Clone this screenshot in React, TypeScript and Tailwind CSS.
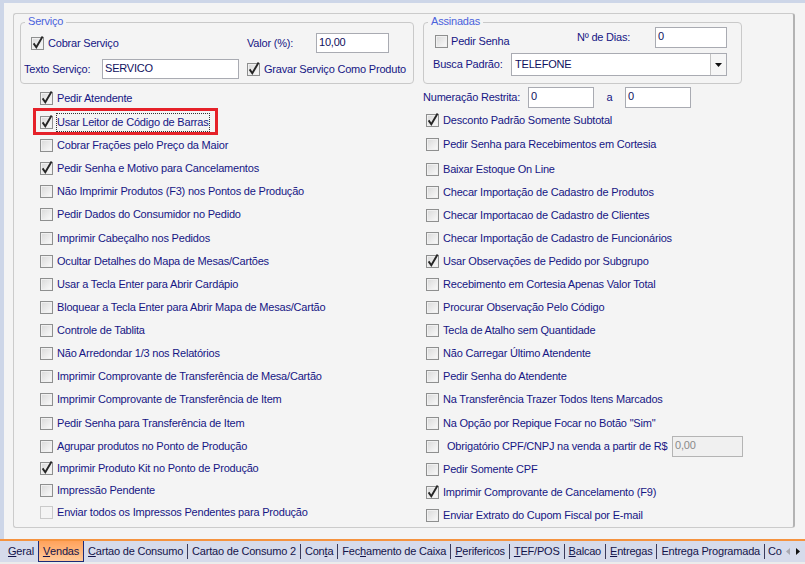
import React from 'react';

type Item = {
  label: string;
  checked?: boolean;
  disabled?: boolean;
  focus?: boolean;
  h: string;
};

const leftItems: Item[] = [
  { label: 'Pedir Atendente', checked: true, h: 'h-[23px]' },
  { label: 'Usar Leitor de Código de Barras', checked: true, focus: true, h: 'h-[24px]' },
  { label: 'Cobrar Frações pelo Preço da Maior', h: 'h-[23px]' },
  { label: 'Pedir Senha e Motivo para Cancelamentos', checked: true, h: 'h-[23px]' },
  { label: 'Não Imprimir Produtos (F3) nos Pontos de Produção', h: 'h-[23px]' },
  { label: 'Pedir Dados do Consumidor no Pedido', h: 'h-[23px]' },
  { label: 'Imprimir Cabeçalho nos Pedidos', h: 'h-[24px]' },
  { label: 'Ocultar Detalhes do Mapa de Mesas/Cartões', h: 'h-[23px]' },
  { label: 'Usar a Tecla Enter para Abrir Cardápio', h: 'h-[23px]' },
  { label: 'Bloquear a Tecla Enter para Abrir Mapa de Mesas/Cartão', h: 'h-[23px]' },
  { label: 'Controle de Tablita', h: 'h-[23px]' },
  { label: 'Não Arredondar 1/3 nos Relatórios', h: 'h-[23px]' },
  { label: 'Imprimir Comprovante de Transferência de Mesa/Cartão', h: 'h-[23px]' },
  { label: 'Imprimir Comprovante de Transferência de Item', h: 'h-[23px]' },
  { label: 'Pedir Senha para Transferência de Item', h: 'h-[24px]' },
  { label: 'Agrupar produtos no Ponto de Produção', h: 'h-[22px]' },
  { label: 'Imprimir Produto Kit no Ponto de Produção', checked: true, h: 'h-[23px]' },
  { label: 'Impressão Pendente', h: 'h-[21px]' },
  { label: 'Enviar todos os Impressos Pendentes para Produção', disabled: true, h: 'h-[22px]' },
];

const rightItems: Item[] = [
  { label: 'Desconto Padrão Somente Subtotal', checked: true, h: 'h-[23px]' },
  { label: 'Pedir Senha para Recebimentos em Cortesia', h: 'h-[25px]' },
  { label: 'Baixar Estoque On Line', h: 'h-[24px]' },
  { label: 'Checar Importação de Cadastro de Produtos', h: 'h-[23px]' },
  { label: 'Checar Importacao de Cadastro de Clientes', h: 'h-[23px]' },
  { label: 'Checar Importação de Cadastro de Funcionários', h: 'h-[23px]' },
  { label: 'Usar Observações de Pedido por Subgrupo', checked: true, h: 'h-[23px]' },
  { label: 'Recebimento em Cortesia Apenas Valor Total', h: 'h-[23px]' },
  { label: 'Procurar Observação Pelo Código', h: 'h-[23px]' },
  { label: 'Tecla de Atalho sem Quantidade', h: 'h-[23px]' },
  { label: 'Não Carregar Último Atendente', h: 'h-[23px]' },
  { label: 'Pedir Senha do Atendente', h: 'h-[23px]' },
  { label: 'Na Transferência Trazer Todos Itens Marcados', h: 'h-[23px]' },
  { label: 'Na Opção por Repique Focar no Botão "Sim"', h: 'h-[24px]' },
];

const rightTail: Item[] = [
  { label: 'Pedir Somente CPF', h: 'h-[24px]' },
  { label: 'Imprimir Comprovante de Cancelamento (F9)', checked: true, h: 'h-[23px]' },
  { label: 'Enviar Extrato do Cupom Fiscal por E-mail', h: 'h-[22px]' },
];

const tabs: { pre: string; u: string; post: string; active?: boolean }[] = [
  { pre: '', u: 'G', post: 'eral' },
  { pre: '', u: 'V', post: 'endas', active: true },
  { pre: '', u: 'C', post: 'artao de Consumo' },
  { pre: 'Cartao de Consumo 2', u: '', post: '' },
  { pre: 'Con', u: 't', post: 'a' },
  { pre: 'Fec', u: 'h', post: 'amento de Caixa' },
  { pre: '', u: 'P', post: 'erifericos' },
  { pre: '', u: 'T', post: 'EF/POS' },
  { pre: '', u: 'B', post: 'alcao' },
  { pre: '', u: 'E', post: 'ntregas' },
  { pre: 'Entrega Programada', u: '', post: '' },
  { pre: 'Co', u: '', post: '' },
];

const CheckBox: React.FC<{ checked?: boolean; disabled?: boolean }> = ({ checked, disabled }) => (
  <span
    className={
      disabled
        ? 'relative block w-[13px] h-[13px] shrink-0 border border-[#cacaca] bg-[#f4f4f4]'
        : 'relative block w-[13px] h-[13px] shrink-0 border border-[#8e8f8f] bg-linear-to-br from-[#d9d9d9] to-[#fbfbfb] shadow-[inset_0_0_0_1px_#f0f0f0]'
    }
  >
    {checked && (
      <svg width="13" height="13" viewBox="0 0 13 13" className="absolute left-[-1px] top-[-1px] overflow-visible">
        <path d="M2.6 6.4 L5.3 10.2 L11.6 -0.6" fill="none" stroke="#262626" strokeWidth="1.9" />
      </svg>
    )}
  </span>
);

const CheckRow: React.FC<{ item: Item }> = ({ item }) => (
  <div className={`relative flex items-center gap-[4px] ${item.h}`}>
    <CheckBox checked={item.checked} disabled={item.disabled} />
    {item.focus ? (
      <span className="-ml-[1px] border border-dotted border-[#333] py-[2px] leading-[13px] text-[#161684]">{item.label}</span>
    ) : (
      <span className="leading-[13px] text-[#161684] whitespace-nowrap">{item.label}</span>
    )}
    {item.focus && (
      <div className="absolute left-[-7px] top-[-2px] w-[185px] h-[27px] border-[3px] border-[#e52129]" />
    )}
  </div>
);

const TextBox: React.FC<{ value: string; className: string; disabled?: boolean }> = ({ value, className, disabled }) => (
  <div
    className={`${className} border pl-[2px] pt-[1px] leading-[15px] ${
      disabled ? 'border-[#b4b4b4] bg-[#f0f0f0] text-[#8a8a8a]' : 'border-[#a9abb2] bg-white text-[#10105e]'
    }`}
  >
    {value}
  </div>
);

export default function App() {
  return (
    <div className="w-[805px] h-[564px] overflow-hidden flex flex-col bg-[#f4f4f4] font-['Liberation_Sans',Arial,sans-serif] text-[11px] tracking-[-0.2px] text-[#161684]">
      <div className="h-[3px] bg-[#cdd6e8] shrink-0" />
      <div className="flex flex-1 min-h-0">
        <div className="w-[4px] bg-[#cdd6e8]" />
        <div className="pl-[9px] pt-[10px]">
          {/* outer frame */}
          <div className="w-[782px] h-[515px] rounded-[3px] border border-[#cbcbcb] border-r-2 border-r-[#b3b3b3] flex flex-col">
            <div className="flex gap-[9px] mt-[8px] pl-[6px]">
              {/* Serviço */}
              <div className="relative w-[394px] h-[62px] rounded-[4px] border border-[#c9c9c9] pt-[10px]">
                <span className="absolute left-[4px] top-[-8px] px-[3px] bg-[#f4f4f4] text-[#4a62dc] leading-[13px]">Serviço</span>
                <div className="flex items-center h-[20px] pl-[10px]">
                  <div className="w-[216px] flex items-center gap-[4px]">
                    <CheckBox checked />
                    <span>Cobrar Serviço</span>
                  </div>
                  <span className="w-[69px]">Valor (%):</span>
                  <TextBox value="10,00" className="w-[73px] h-[20px]" />
                </div>
                <div className="flex items-center h-[20px] mt-[6px] pl-[3px]">
                  <span className="w-[78px]">Texto Serviço:</span>
                  <TextBox value="SERVICO" className="w-[137px] h-[20px]" />
                  <div className="ml-[8px] flex items-center gap-[4px]">
                    <CheckBox checked />
                    <span className="whitespace-nowrap">Gravar Serviço Como Produto</span>
                  </div>
                </div>
              </div>
              {/* Assinadas */}
              <div className="relative w-[319px] h-[62px] rounded-[4px] border border-[#c9c9c9] pt-[4px]">
                <span className="absolute left-[4px] top-[-8px] px-[3px] bg-[#f4f4f4] text-[#4a62dc] leading-[13px]">Assinadas</span>
                <div className="flex items-center h-[21px] pl-[11px]">
                  <div className="w-[142px] mt-[8px] flex items-center gap-[3px]">
                    <CheckBox />
                    <span>Pedir Senha</span>
                  </div>
                  <span className="w-[78px]">Nº de Dias:</span>
                  <TextBox value="0" className="w-[72px] h-[21px]" />
                </div>
                <div className="flex items-center h-[23px] mt-[5px] pl-[9px]">
                  <span className="w-[78px] whitespace-nowrap">Busca Padrão:</span>
                  <div className="w-[216px] h-[23px] flex border border-[#a9abb2] bg-white">
                    <span className="flex-1 pl-[3px] flex items-center text-[#10105e]">TELEFONE</span>
                    <span className="w-[16px] border-l border-[#c3c3c3] bg-[#f6f6f6] flex items-center justify-center">
                      <svg width="7" height="4" viewBox="0 0 7 4">
                        <path d="M0 0 H7 L3.5 4 Z" fill="#111" />
                      </svg>
                    </span>
                  </div>
                </div>
              </div>
            </div>

            <div className="flex">
              <div className="w-[409px] pl-[26px] pt-[3px] flex flex-col">
                {leftItems.map((it) => (
                  <CheckRow key={it.label} item={it} />
                ))}
              </div>
              <div className="pl-[3px] pt-[2px] flex flex-col">
                <div className="flex items-center h-[23px] -ml-[3px]">
                  <span className="w-[105px] whitespace-nowrap">Numeração Restrita:</span>
                  <TextBox value="0" className="w-[66px] h-[21px]" />
                  <span className="w-[31px] text-center">a</span>
                  <TextBox value="0" className="w-[66px] h-[21px]" />
                </div>
                {rightItems.map((it) => (
                  <CheckRow key={it.label} item={it} />
                ))}
                <div className="flex items-center h-[22px]">
                  <CheckBox />
                  <span className="w-[233px] pl-[8px] whitespace-nowrap">Obrigatório CPF/CNPJ na venda a partir de R$</span>
                  <TextBox value="0,00" disabled className="w-[71px] h-[21px]" />
                </div>
                {rightTail.map((it) => (
                  <CheckRow key={it.label} item={it} />
                ))}
              </div>
            </div>
          </div>
        </div>
      </div>

      {/* tab strip */}
      <div className="h-[2px] bg-[#f5933f] shrink-0" />
      <div className="h-[21px] bg-[#d6dbeb] flex shrink-0">
        <div className="flex-1 overflow-hidden flex pl-[4px] text-[#14144a]">
          {tabs.map((t, i) => (
            <React.Fragment key={i}>
              {i > 0 && !t.active && !tabs[i - 1].active && (
                <span className="w-px shrink-0 my-[3px] bg-[#3a3a5a]" />
              )}
              <div
                className={
                  t.active
                    ? 'px-[4px] flex items-center whitespace-nowrap bg-linear-to-b from-[#ffa25a] to-[#ffc99a] border-x border-b border-[#1c2a78]'
                    : i === tabs.length - 1
                    ? 'pl-[3px] flex items-center whitespace-nowrap'
                    : 'px-[4px] flex items-center whitespace-nowrap'
                }
              >
                {t.pre}
                {t.u && <u>{t.u}</u>}
                {t.post}
              </div>
            </React.Fragment>
          ))}
        </div>
        <div className="w-[22px] flex items-center justify-end gap-[6px] pr-[5px]">
          <svg width="4" height="7" viewBox="0 0 4 7">
            <path d="M4 0 V7 L0 3.5 Z" fill="#a8a8b0" />
          </svg>
          <svg width="4" height="7" viewBox="0 0 4 7">
            <path d="M0 0 V7 L4 3.5 Z" fill="#111" />
          </svg>
        </div>
      </div>
      <div className="h-[2px] bg-[#ececec] shrink-0" />
    </div>
  );
}
